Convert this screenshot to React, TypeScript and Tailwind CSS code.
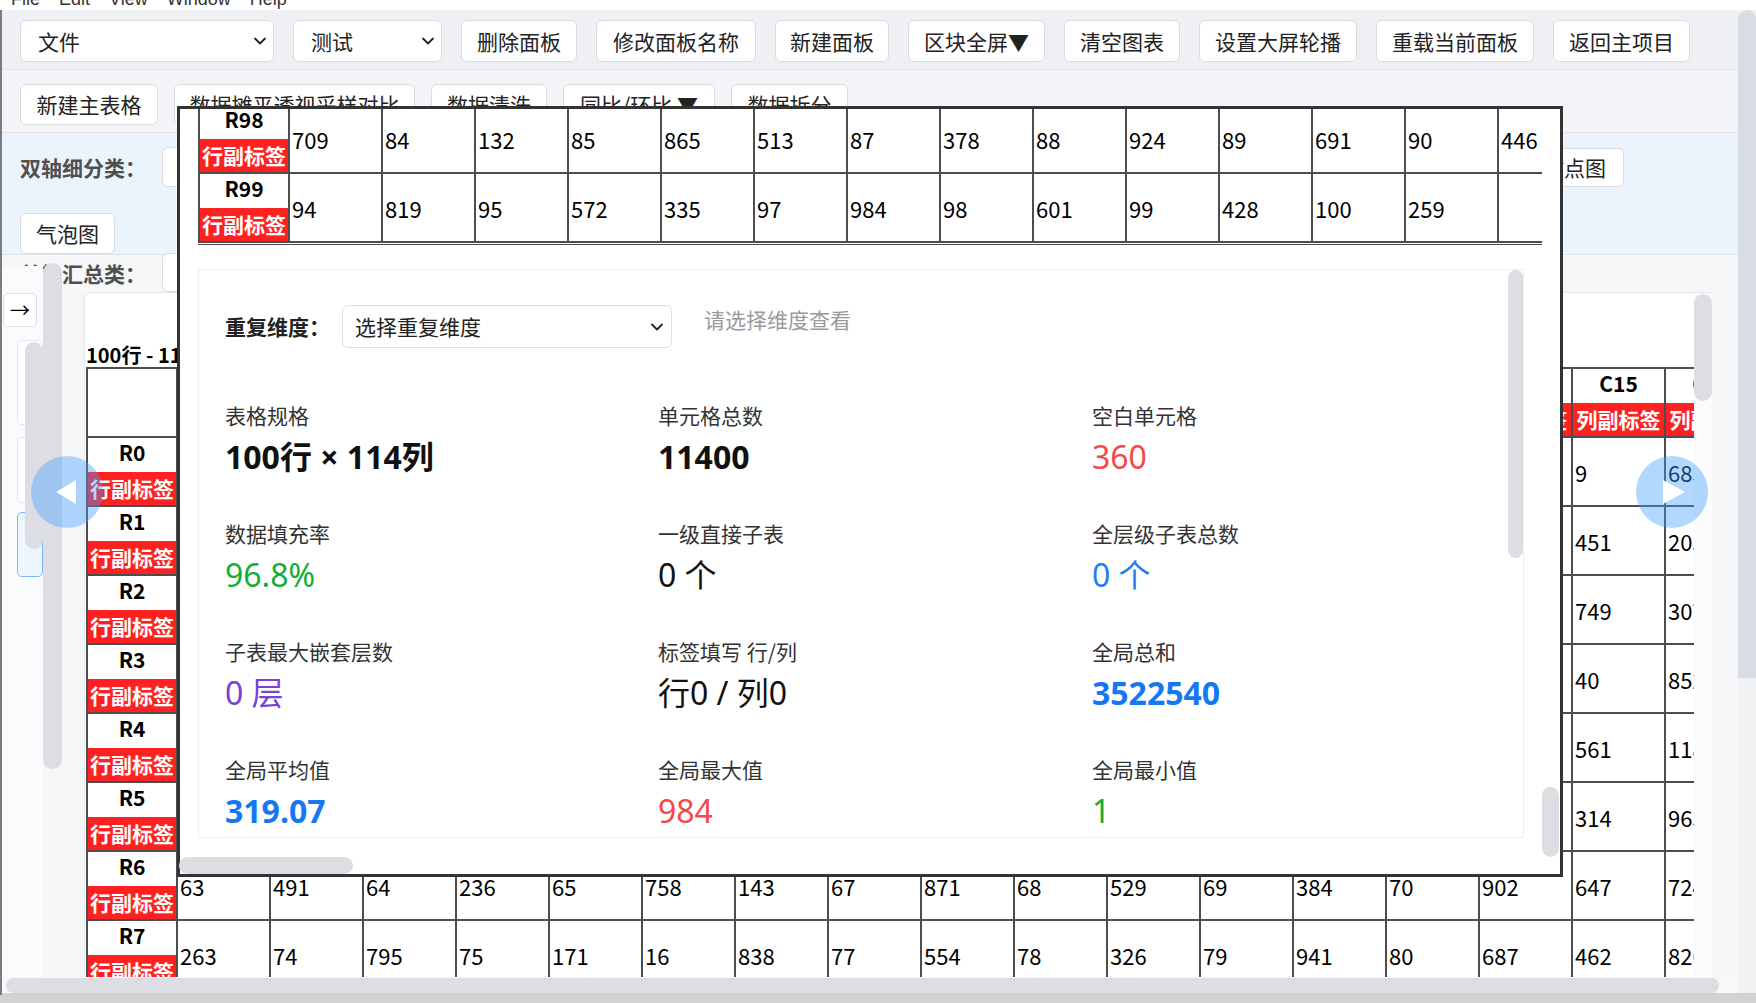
import React from "react";

const FONT = "font-['Noto_Sans_CJK_SC','Noto_Sans',sans-serif]";

function Chevron() {
  return (
    <svg width="12" height="8" viewBox="0 0 12 8" className="shrink-0">
      <polyline points="1,1.5 6,6.5 11,1.5" fill="none" stroke="#222" strokeWidth="1.8" strokeLinecap="round" strokeLinejoin="round" />
    </svg>
  );
}

function Btn({ className, children }: { className: string; children: React.ReactNode }) {
  return (
    <div className={`shrink-0 rounded-[6px] border border-[#d9dce1] bg-white flex items-center justify-center text-[21px] leading-none text-[#222] ${className}`}>
      {children}
    </div>
  );
}

function Sel({ className, label }: { className: string; label: string }) {
  return (
    <div className={`h-[42px] shrink-0 rounded-[6px] border border-[#d9dce1] bg-white flex items-center justify-between pl-[17px] pr-[7px] text-[21px] leading-none text-[#222] ${className}`}>
      <span>{label}</span>
      <Chevron />
    </div>
  );
}

// deterministic pseudo random values
function makeVals(rows: number, cols: number, seed: number) {
  let s = seed;
  const out: number[][] = [];
  for (let r = 0; r < rows; r++) {
    const row: number[] = [];
    for (let c = 0; c < cols; c++) {
      s = (s * 1103515245 + 12345) % 2147483648;
      row.push((s % 999) + 1);
    }
    out.push(row);
  }
  return out;
}

const base = makeVals(10, 17, 42);
const known: Record<number, Record<number, number>> = {
  0: { 15: 9, 16: 683 },
  1: { 15: 451, 16: 205 },
  2: { 15: 749, 16: 307 },
  3: { 15: 40, 16: 852 },
  4: { 15: 561, 16: 118 },
  5: { 15: 314, 16: 963 },
};
const R6 = [63, 491, 64, 236, 65, 758, 143, 67, 871, 68, 529, 69, 384, 70, 902, 647, 724];
const R7 = [263, 74, 795, 75, 171, 16, 838, 77, 554, 78, 326, 79, 941, 80, 687, 462, 826];
const mainRows: (number | string)[][] = base.map((row, r) => {
  if (r === 6) return R6;
  if (r === 7) return R7;
  return row.map((v, c) => (known[r] && known[r][c] !== undefined ? known[r][c] : v));
});

const R98 = [709, 84, 132, 85, 865, 513, 87, 378, 88, 924, 89, 691, 90, 446];
const R99: (number | string)[] = [94, 819, 95, 572, 335, 97, 984, 98, 601, 99, 428, 100, 259, ""];

function RedTag({ text }: { text: string }) {
  return (
    <div className="mt-[6px] h-[33px] w-full bg-[#ff2121] text-white font-bold text-[21px] leading-none flex items-center justify-center whitespace-nowrap overflow-hidden">
      {text}
    </div>
  );
}

function LabelCell({ name }: { name: string }) {
  return (
    <div className="w-[92px] h-full shrink-0 border-l-2 border-r-2 border-[#4d4d4d] flex flex-col items-center">
      <div className="h-[28px] leading-[28px] text-[21px] font-bold text-black">{name}</div>
      <RedTag text="行副标签" />
    </div>
  );
}

function HeadCell({ name }: { name: string }) {
  return (
    <div className="w-[93px] h-full shrink-0 border-r-2 border-[#4d4d4d] flex flex-col items-center">
      <div className="h-[28px] leading-[28px] text-[21px] font-bold text-black">{name}</div>
      <RedTag text="列副标签" />
    </div>
  );
}

function DataCell({ v }: { v: number | string }) {
  return (
    <div className="w-[93px] h-full shrink-0 border-r-2 border-[#4d4d4d] flex items-center pl-[2px] text-[22px] leading-none text-black">
      {v}
    </div>
  );
}

type Stat = { label: string; value: string; cls: string };
const stats: Stat[] = [
  { label: "表格规格", value: "100行 × 114列", cls: "font-bold text-[#111]" },
  { label: "单元格总数", value: "11400", cls: "font-bold text-[#111]" },
  { label: "空白单元格", value: "360", cls: "text-[#f4484d]" },
  { label: "数据填充率", value: "96.8%", cls: "text-[#15ad38]" },
  { label: "一级直接子表", value: "0 个", cls: "text-[#111]" },
  { label: "全层级子表总数", value: "0 个", cls: "text-[#1f7ff0]" },
  { label: "子表最大嵌套层数", value: "0 层", cls: "text-[#7a3fd6]" },
  { label: "标签填写 行/列", value: "行0 / 列0", cls: "text-[#111]" },
  { label: "全局总和", value: "3522540", cls: "font-bold text-[#1677f5]" },
  { label: "全局平均值", value: "319.07", cls: "font-bold text-[#1677f5]" },
  { label: "全局最大值", value: "984", cls: "text-[#f4484d]" },
  { label: "全局最小值", value: "1", cls: "text-[#15ad38]" },
];

export default function App() {
  const cols = Array.from({ length: 17 }, (_, i) => `C${i}`);
  return (
    <div className={`relative w-[1756px] h-[1003px] overflow-hidden bg-[#f5f6f8] flex flex-col ${FONT}`}>
      <div className="h-[993px] flex shrink-0">
        {/* page */}
        <div className="w-[1738px] h-full flex flex-col">
          {/* menu strip (cut off) */}
          <div className="h-[10px] shrink-0 bg-white relative overflow-hidden">
            <div className="absolute left-[11px] top-[-10px] flex gap-[19px] text-[18px] leading-[18px] text-[#333] font-['Liberation_Sans',sans-serif]">
              <span>File</span>
              <span>Edit</span>
              <span>View</span>
              <span>Window</span>
              <span>Help</span>
            </div>
          </div>
          {/* row 1 */}
          <div className="h-[60px] shrink-0 flex items-start pt-[10px] gap-[19px] pl-[20px] bg-[#eef0f3] border-b border-[#e1e4e8]">
            <Sel className="w-[254px]" label="文件" />
            <Sel className="w-[149px]" label="测试" />
            <Btn className="h-[42px] w-[116px]">删除面板</Btn>
            <Btn className="h-[42px] w-[160px]">修改面板名称</Btn>
            <Btn className="h-[42px] w-[114px]">新建面板</Btn>
            <Btn className="h-[42px] w-[137px]">区块全屏▼</Btn>
            <Btn className="h-[42px] w-[116px]">清空图表</Btn>
            <Btn className="h-[42px] w-[158px]">设置大屏轮播</Btn>
            <Btn className="h-[42px] w-[158px]">重载当前面板</Btn>
            <Btn className="h-[42px] w-[137px]">返回主项目</Btn>
          </div>
          {/* row 2 */}
          <div className="h-[63px] shrink-0 flex items-start pt-[14px] gap-[16px] pl-[20px] bg-[#f3f4f7] border-b border-[#e1e5ea]">
            <Btn className="h-[41px] w-[138px]">新建主表格</Btn>
            <Btn className="h-[41px] w-[241px]">数据摊平透视采样对比</Btn>
            <Btn className="h-[41px] w-[116px]">数据清洗</Btn>
            <Btn className="h-[41px] w-[152px]">同比/环比 ▼</Btn>
            <Btn className="h-[41px] w-[117px]">数据拆分</Btn>
          </div>
          {/* blue row */}
          <div className="h-[122px] shrink-0 bg-[#ebf4fd] border-b border-[#dde6ef] flex flex-col pl-[20px]">
            <div className="mt-[14px] h-[40px] flex items-center">
              <div className="w-[142px] text-[21px] font-bold text-[#505050] leading-none">双轴细分类：</div>
              <div className="w-[300px] h-[40px] rounded-[6px] border border-[#d9dce1] bg-white" />
              <Btn className="ml-auto mr-[114px] h-[39px] w-[99px]">散点图</Btn>
            </div>
            <Btn className="mt-[26px] h-[41px] w-[95px]">气泡图</Btn>
          </div>
          {/* summary row */}
          <div className="h-[37px] shrink-0 flex items-center pl-[20px] bg-[#f6f7f9]">
            <div className="w-[142px] text-[21px] font-bold text-[#505050] leading-none">单轴汇总类：</div>
            <div className="w-[300px] h-[39px] self-start -mt-[2px] rounded-[6px] border border-[#d9dce1] bg-white" />
          </div>
          {/* main area */}
          <div className="h-[685px] shrink-0 flex">
            <div className="w-[84px] shrink-0" />
            <div className="w-[1628px] shrink-0 h-full bg-white border-l border-t border-[#e4e7ed] rounded-tl-[6px] flex overflow-hidden">
              <div className="w-[1609px] h-full overflow-hidden pl-[1px]">
                <div className="mt-[50px] h-[24px] leading-[24px] text-[20px] font-bold text-black whitespace-nowrap">100行 - 114列</div>
                <div className="w-max">
                  <div className="h-[71px] flex border-t-2 border-b-2 border-[#4d4d4d]">
                    <div className="w-[92px] h-full shrink-0 border-l-2 border-r-2 border-[#4d4d4d]" />
                    {cols.map((c) => (
                      <HeadCell key={c} name={c} />
                    ))}
                  </div>
                  {mainRows.map((row, r) => (
                    <div key={r} className="h-[69px] flex border-b-2 border-[#4d4d4d]">
                      <LabelCell name={`R${r}`} />
                      {row.map((v, c) => (
                        <DataCell key={c} v={v} />
                      ))}
                    </div>
                  ))}
                </div>
              </div>
              <div className="w-[18px] shrink-0 h-full bg-[#fafbfc] relative">
                <div className="absolute left-0 top-[1px] w-[18px] h-[107px] rounded-full bg-[#dcdee4]" />
              </div>
            </div>
            <div className="flex-1" />
          </div>
          {/* horizontal page scrollbar */}
          <div className="h-[16px] shrink-0 bg-[#f8f8f9] flex items-center">
            <div className="ml-[6px] w-[1713px] h-[15px] rounded-full bg-[#dcdee4]" />
          </div>
        </div>
        {/* right page scrollbar */}
        <div className="w-[18px] h-full shrink-0 flex flex-col bg-[#f1f2f4]">
          <div className="h-[10px] bg-white" />
          <div className="h-[668px] w-[18px] rounded-t-[9px] bg-[#dadce3]" />
        </div>
      </div>
      <div className="h-[10px] shrink-0 bg-[#d2d2d2]" />

      {/* left window edge */}
      <div className="absolute left-0 top-[10px] w-[2px] h-[985px] bg-[#7c7c7c]" />

      {/* sidebar drawer overlay */}
      <div className="absolute left-[2px] top-[266px] w-[41px] h-[711px] bg-[#fafbfc]" />
      <div className="absolute left-[3px] top-[293px] w-[34px] h-[34px] rounded-[5px] border border-[#dcdfe6] bg-white flex items-center justify-center text-[20px] leading-none text-black">→</div>
      <div className="absolute left-[17px] top-[340px] w-[26px] h-[85px] rounded-[5px] border border-[#e4e7ed] bg-white" />
      <div className="absolute left-[17px] top-[437px] w-[26px] h-[66px] rounded-[5px] border border-[#e4e7ed] bg-white" />
      <div className="absolute left-[17px] top-[512px] w-[26px] h-[65px] rounded-[5px] border border-[#7fb6f7] bg-[#edf5ff]" />
      <div className="absolute left-[25px] top-[342px] w-[18px] h-[207px] rounded-full bg-[#dcdee4]" />
      <div className="absolute left-[43px] top-[263px] w-[19px] h-[506px] rounded-full bg-[#dcdee4]" />

      {/* carousel nav circles */}
      <div className="absolute left-[31px] top-[456px] w-[72px] h-[72px] rounded-full bg-[rgba(64,158,255,0.4)] flex items-center justify-center">
        <svg width="20" height="24" viewBox="0 0 20 24" className="mr-[2px]">
          <polygon points="20,0 20,24 0,12" fill="#ffffff" />
        </svg>
      </div>
      <div className="absolute left-[1636px] top-[456px] w-[72px] h-[72px] rounded-full bg-[rgba(64,158,255,0.4)] flex items-center justify-center">
        <svg width="22" height="24" viewBox="0 0 22 24" className="ml-[3px]">
          <polygon points="0,0 0,24 22,12" fill="#ffffff" />
        </svg>
      </div>

      {/* modal overlay */}
      <div className="absolute left-[177px] top-[106px] w-[1386px] h-[771px] border-[3px] border-[#333] bg-white flex flex-col">
        <div className="h-[748px] flex shrink-0">
          <div className="w-[1362px] h-full overflow-hidden flex flex-col">
            <div className="-mt-[4px] ml-[18px] w-max shrink-0">
              <div className="h-[69px] flex border-b-2 border-[#4d4d4d]">
                <LabelCell name="R98" />
                {R98.map((v, i) => (
                  <DataCell key={i} v={v} />
                ))}
              </div>
              <div className="h-[69px] flex border-b-2 border-[#4d4d4d]">
                <LabelCell name="R99" />
                {R99.map((v, i) => (
                  <DataCell key={i} v={v} />
                ))}
              </div>
            </div>
            <div className="ml-[18px] mt-[1px] h-[1px] w-[1344px] shrink-0 bg-[#4d4d4d]" />
            <div className="ml-[18px] mt-[24px] w-[1326px] h-[569px] shrink-0 border border-[#ebeef5] bg-white relative overflow-hidden">
              <div className="absolute right-0 top-0 w-[15px] h-[288px] rounded-full bg-[#dcdee4]" />
              <div className="pl-[26px] pt-[35px]">
                <div className="flex items-start">
                  <div className="w-[117px] h-[43px] flex items-center text-[21px] font-bold text-[#222] leading-none">重复维度：</div>
                  <div className="w-[330px] h-[43px] rounded-[6px] border border-[#dcdfe6] bg-white flex items-center justify-between pl-[12px] pr-[8px] text-[21px] leading-none text-[#222]">
                    <span>选择重复维度</span>
                    <Chevron />
                  </div>
                  <div className="ml-[32px] text-[21px] leading-[28px] text-[#9a9a9a]">请选择维度查看</div>
                </div>
                <div className="mt-[53px] grid grid-cols-[433px_434px_1fr] gap-y-[42px]">
                  {stats.map((s) => (
                    <div key={s.label} className="flex flex-col">
                      <div className="text-[21px] leading-[28px] text-[#333] whitespace-nowrap">{s.label}</div>
                      <div className={`mt-[8px] text-[32px] leading-[40px] whitespace-nowrap font-['Noto_Sans','Noto_Sans_CJK_SC',sans-serif] ${s.cls}`}>{s.value}</div>
                    </div>
                  ))}
                </div>
              </div>
            </div>
          </div>
          <div className="w-[18px] h-full shrink-0 relative bg-white">
            <div className="absolute left-0 top-[678px] w-[17px] h-[70px] rounded-full bg-[#dcdee4]" />
          </div>
        </div>
        <div className="flex-1 relative bg-white">
          <div className="absolute left-[-1px] top-0 w-[174px] h-[17px] rounded-full bg-[#dcdee4]" />
        </div>
      </div>
    </div>
  );
}
